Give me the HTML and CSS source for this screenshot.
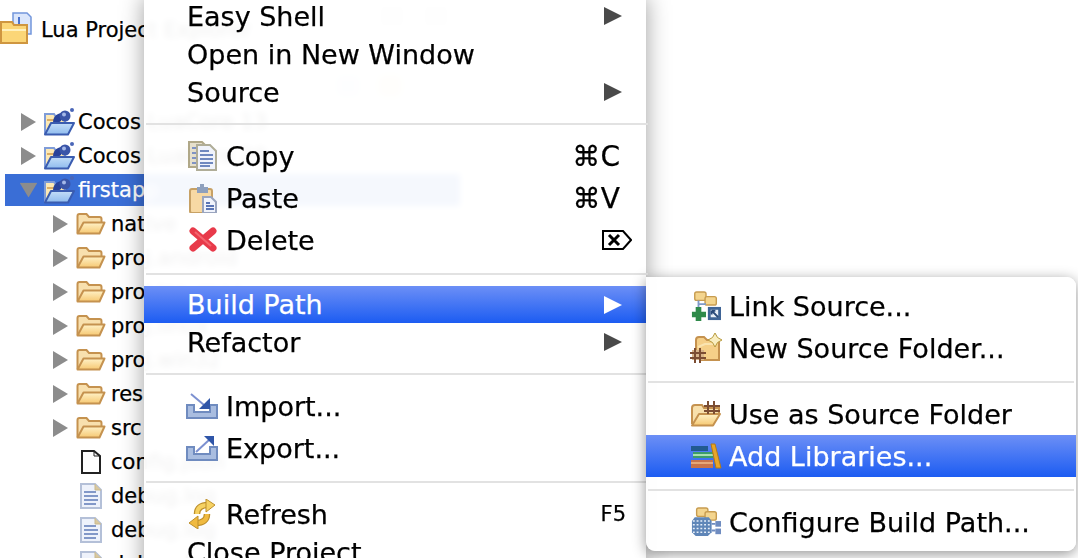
FILE: index.html
```html
<!DOCTYPE html>
<html lang="en">
<head>
<meta charset="utf-8">
<title>Lua Project Explorer</title>
<link rel="stylesheet" href="styles.css">
</head>
<body>
<svg class="defs" width="0" height="0" aria-hidden="true">
  <defs>
    <linearGradient id="fy" x1="0" y1="0" x2="0" y2="1"><stop offset="0" stop-color="#fff2c8"/><stop offset="1" stop-color="#f6c872"/></linearGradient>
    <linearGradient id="fb" x1="0" y1="0" x2="0" y2="1"><stop offset="0" stop-color="#c4def8"/><stop offset="1" stop-color="#8fbbee"/></linearGradient>
    <symbol id="folder" viewBox="0 0 30 24">
      <path d="M1.500 21V4q0-2 2-2h7l2.500 3h10.500q2 0 2 2v3" fill="#f8e0ae" stroke="#c5924f" stroke-width="2"/>
      <path d="M1.500 21.500 7.500 10.500h21l-5 11z" fill="url(#fy)" stroke="#c5924f" stroke-width="2" stroke-linejoin="round"/>
    </symbol>
    <symbol id="project" viewBox="0 0 32 28">
      <path d="M2 25V6h9l2 3h9v16z" fill="#fde9b4" stroke="#7f9cd8" stroke-width="2"/>
      <path d="M4 12h10" stroke="#dcae66" stroke-width="2"/>
      <path d="M10 15c0-6 3-9 8-10v8l-3 2z" fill="#28429a"/>
      <circle cx="22" cy="8" r="5.500" fill="#3a55a8"/><circle cx="21" cy="6.500" r="2" fill="#a4b8e8"/>
      <circle cx="29" cy="2" r="2" fill="#4a66b8"/>
      <path d="M2 26.500 8 15h23l-6 11.500z" fill="url(#fb)" stroke="#3a5cb0" stroke-width="2" stroke-linejoin="round"/>
    </symbol>
    <symbol id="triangle" viewBox="0 0 16 18" preserveAspectRatio="none"><path d="M0 0 16 9 0 18z"/></symbol>
    <symbol id="textdoc" viewBox="0 0 22 26">
      <path d="M1 1h14l6 6v18H1z" fill="#eef2fb" stroke="#b4c0d8" stroke-width="2"/>
      <path d="M15 1v6h6" fill="#d9c89e" stroke="#c9b98e"/>
      <path d="M4 9h12M4 13h14M4 17h14M4 21h12" stroke="#8298c8" stroke-width="2"/>
    </symbol>
  </defs>
</svg>

<main class="explorer">
  <header class="explorer-head">
    <svg class="head-icon" viewBox="0 0 32 32">
      <path d="M13 1h14l4 4v17H13z" fill="#dbe6fb" stroke="#7396dc" stroke-width="1.500"/>
      <path d="M19 5v9h7" fill="none" stroke="#4a72cc" stroke-width="2"/>
      <path d="M1 31V10h11l2 3h13v18z" fill="#fbd677" stroke="#cf9640" stroke-width="2"/>
      <path d="M2 18h24" stroke="#fff1bd" stroke-width="2"/>
    </svg>
    <span class="head-title">Lua Project Explorer</span>
    <span class="tool-box"></span>
    <span class="tool-box"></span>
  </header>
  <div class="toolbar">
    <span class="tool-dot blue"></span>
    <span class="tool-dot orange"></span>
  </div>

  <ul class="tree">
    <li class="tree-row"><svg class="tw"><use href="#triangle"/></svg><svg class="pi"><use href="#project"/></svg><span>Cocos LuaCore 13</span></li>
    <li class="tree-row"><svg class="tw"><use href="#triangle"/></svg><svg class="pi"><use href="#project"/></svg><span>Cocos LuaCore 20</span></li>
    <li class="tree-row selected"><svg class="tw open"><use href="#triangle"/></svg><svg class="pi"><use href="#project"/></svg><span>firstapp</span></li>
    <li class="tree-row child"><svg class="tw"><use href="#triangle"/></svg><svg class="fi"><use href="#folder"/></svg><span>native</span></li>
    <li class="tree-row child"><svg class="tw"><use href="#triangle"/></svg><svg class="fi"><use href="#folder"/></svg><span>proj.android</span></li>
    <li class="tree-row child"><svg class="tw"><use href="#triangle"/></svg><svg class="fi"><use href="#folder"/></svg><span>proj.ios_mac</span></li>
    <li class="tree-row child"><svg class="tw"><use href="#triangle"/></svg><svg class="fi"><use href="#folder"/></svg><span>proj.linux</span></li>
    <li class="tree-row child"><svg class="tw"><use href="#triangle"/></svg><svg class="fi"><use href="#folder"/></svg><span>proj.win32</span></li>
    <li class="tree-row child"><svg class="tw"><use href="#triangle"/></svg><svg class="fi"><use href="#folder"/></svg><span>res</span></li>
    <li class="tree-row child"><svg class="tw"><use href="#triangle"/></svg><svg class="fi"><use href="#folder"/></svg><span>src</span></li>
    <li class="tree-row file">
      <svg class="doc" viewBox="0 0 22 26"><path d="M2 2h12l6 5v17H2z" fill="#fff" stroke="#222" stroke-width="2"/><path d="M14 2v5h6" fill="none" stroke="#222"/></svg><span>config.json</span></li>
    <li class="tree-row file"><svg class="doc"><use href="#textdoc"/></svg><span>debug.log</span></li>
    <li class="tree-row file"><svg class="doc"><use href="#textdoc"/></svg><span>debug.log</span></li>
    <li class="tree-row file"><svg class="doc"><use href="#textdoc"/></svg><span>debug.log</span></li>
  </ul>
</main>

<nav class="menu main-menu">
  <div class="item"><span class="label">Easy Shell</span><svg class="arrow"><use href="#triangle"/></svg></div>
  <div class="item"><span class="label">Open in New Window</span></div>
  <div class="item"><span class="label">Source</span><svg class="arrow"><use href="#triangle"/></svg></div>
  <hr class="sep">
  <div class="item tall"><svg class="ico" viewBox="0 0 30 30"><path d="M2 1h13l3 3v22H2z" fill="#e6e0cc" stroke="#b0a888" stroke-width="2"/><path d="M5 7h8M5 12h8M5 17h8M5 22h8" stroke="#7f93c4" stroke-width="2"/><path d="M10 4h13l6 6v19H10z" fill="#f0f3fb" stroke="#b0ad98" stroke-width="2"/><path d="M13 10h9M13 14h13M13 18h13M13 22h13M13 25h10" stroke="#6f88bf" stroke-width="2"/></svg><span class="label">Copy</span><span class="key">⌘C</span></div>
  <div class="item tall"><svg class="ico" viewBox="0 0 30 30"><rect x="3" y="6" width="22" height="24" rx="2" fill="#f7d9a4" stroke="#c7a165" stroke-width="2"/><path d="M10 10V4h3V1h4v3h4v6z" fill="#8ea0bd"/><path d="M16 14h8l5 5v11H16z" fill="#f0f3fb" stroke="#9aa5bf" stroke-width="2"/><path d="M19 20h4M19 23h8M19 26h8" stroke="#5a75b5" stroke-width="2"/></svg><span class="label">Paste</span><span class="key">⌘V</span></div>
  <div class="item tall"><svg class="ico" viewBox="0 0 30 30"><path d="M6 6 26 23M26 6 6 23" stroke="#e83a4a" stroke-width="7" stroke-linecap="round"/><path d="M8 7 24 21" stroke="#f4646e" stroke-width="2"/></svg><span class="label">Delete</span><svg class="del-key" viewBox="0 0 30 20"><path d="M1 1h20l8 9-8 9H1z" fill="none" stroke="#000" stroke-width="2"/><path d="M7 5 17 15M17 5 7 15" stroke="#000" stroke-width="3"/></svg></div>
  <hr class="sep">
  <div class="item active"><span class="label">Build Path</span><svg class="arrow"><use href="#triangle"/></svg></div>
  <div class="item"><span class="label">Refactor</span><svg class="arrow"><use href="#triangle"/></svg></div>
  <hr class="sep">
  <div class="item tall"><svg class="ico wide" viewBox="0 0 32 26"><path d="M1 12h7v7h16v-7h7v13H1z" fill="#a9bde0" stroke="#6f8bbf" stroke-width="2"/><path d="M5 1l13 11" stroke="#7c90d0" stroke-width="2"/><path d="M13 16h11V5z" fill="#2f55a8"/></svg><span class="label">Import...</span></div>
  <div class="item tall"><svg class="ico wide" viewBox="0 0 32 26"><path d="M1 12h7v7h16v-7h7v13H1z" fill="#a9bde0" stroke="#6f8bbf" stroke-width="2"/><path d="M10 17 23 5" stroke="#7c90d0" stroke-width="2"/><path d="M18 1h10v10z" fill="#2f55a8"/></svg><span class="label">Export...</span></div>
  <hr class="sep">
  <div class="item tall"><svg class="ico" viewBox="0 0 30 30"><path d="M10 15c0-6 4-9 11-9" fill="none" stroke="#bd8f2c" stroke-width="6.500"/><path d="M10 15c0-6 4-9 11-9" fill="none" stroke="#f6d263" stroke-width="4"/><path d="M19 0l9 6-9 7z" fill="#f6d263" stroke="#bd8f2c"/><path d="M20 15c0 6-4 9-11 9" fill="none" stroke="#bd8f2c" stroke-width="6.500"/><path d="M20 15c0 6-4 9-11 9" fill="none" stroke="#f0ba40" stroke-width="4"/><path d="M11 17l-9 7 9 6z" fill="#f0ba40" stroke="#bd8f2c"/></svg><span class="label">Refresh</span><span class="key fn">F5</span></div>
  <div class="item last"><span class="label">Close Project</span></div>
</nav>

<nav class="menu sub-menu">
  <div class="item tall"><svg class="ico" viewBox="0 0 32 32"><rect x="4" y="1" width="12" height="9" rx="2" fill="#f4d58e" stroke="#c79c50" stroke-width="1.500"/><rect x="15" y="6" width="12" height="9" rx="2" fill="#f4d58e" stroke="#c79c50" stroke-width="1.500"/><path d="M8 10v8M8 14h8" stroke="#7f9ac8" stroke-width="2"/><path d="M5 17h6v5h5v6h-5v4H5v-4H1v-6h4z" fill="#2f8a4a"/><rect x="18" y="17" width="14" height="14" fill="#3f6496"/><rect x="21" y="20" width="8" height="8" fill="#e8eff8"/><path d="M22 21l7 7M22 21h4M22 21v4" stroke="#2a4a7a" stroke-width="2"/></svg><span class="label">Link Source...</span></div>
  <div class="item tall"><svg class="ico" viewBox="0 0 32 30"><path d="M6 18V7q0-3 3-3h5l3 3h12v20H10" fill="#f5cf88" stroke="#c5924f" stroke-width="2"/><path d="M8 14l7-3h10" fill="none" stroke="#fae4b0" stroke-width="2"/><path d="M25 0l2.500 4.500L32 7l-4.500 2.500L25 14l-2.500-4.500L18 7l4.500-2.500z" fill="#f9eec0" stroke="#b79a3e"/><rect x="2" y="17" width="12" height="10" fill="#d8b48a"/><path d="M0 20h16M0 25h16M5 15v15M10 15v15" stroke="#7c4d32" stroke-width="2"/></svg><span class="label">New Source Folder...</span></div>
  <hr class="sep">
  <div class="item tall"><svg class="ico" viewBox="0 0 32 26"><path d="M2 23V7q0-3 3-3h7l2 3h15v6" fill="#f8e0ac" stroke="#c5924f" stroke-width="2"/><path d="M2 24.500 9 13h21l-7 11.500z" fill="url(#fy)" stroke="#c5924f" stroke-width="2" stroke-linejoin="round"/><path d="M14 5h16M14 10h16M18 0v13M24 0v13" stroke="#7c4d32" stroke-width="2"/></svg><span class="label">Use as Source Folder</span></div>
  <div class="item tall active"><svg class="ico" viewBox="0 0 32 26"><rect x="1" y="17" width="22" height="8" fill="#c9744a"/><rect x="1" y="19" width="22" height="2" fill="#e6a878"/><rect x="3" y="9" width="20" height="6" fill="#3d9c6a"/><rect x="3" y="11" width="20" height="2" fill="#a8e0b0"/><rect x="1" y="3" width="17" height="5" fill="#225a90"/><path d="M21 1h4l6 24h-5z" fill="#e8a52a" stroke="#b27a18"/></svg><span class="label">Add Libraries...</span></div>
  <hr class="sep">
  <div class="item tall"><svg class="ico" viewBox="0 0 32 32"><rect x="6" y="1" width="12" height="9" rx="2" fill="#f4d58e" stroke="#c79c50" stroke-width="1.500"/><rect x="15" y="5" width="12" height="9" rx="2" fill="#f4d58e" stroke="#c79c50" stroke-width="1.500"/><path d="M4 11h15l3 4v12l-4 4H5l-4-4V15z" fill="#5f86b8"/><path d="M2 15h19M2 19h19M2 23h19M2 27h19" stroke="#e6eef8" stroke-width="1.500" stroke-dasharray="2 2"/><path d="M22 18h4M22 25h4" stroke="#6f8cc0" stroke-width="2"/><rect x="26" y="15" width="6" height="6" fill="#6f8cc0"/><rect x="26" y="23" width="6" height="6" fill="#6f8cc0"/></svg><span class="label">Configure Build Path...</span></div>
</nav>
</body>
</html>
```
FILE: styles.css
```css
* { box-sizing: border-box; }
html, body { margin: 0; height: 100%; }
body {
  position: relative;
  width: 1078px;
  height: 558px;
  overflow: hidden;
  background: #fff;
  color: #000;
  font-family: "DejaVu Sans", "Liberation Sans", sans-serif;
  -webkit-text-stroke: 0.25px currentColor;
}
.defs { position: absolute; }

.explorer { width: 470px; font-size: 21px; }
.explorer-head { display: flex; align-items: center; height: 60px; }
.head-icon { width: 32px; height: 32px; margin: -4px 9px 0 0; flex: none; }
.head-title { width: 338px; white-space: nowrap; }
.tool-box { width: 26px; height: 22px; margin-right: 18px; margin-top: -28px; background: #e6e6e6; flex: none; }
.toolbar { display: flex; gap: 16px; height: 45px; padding: 14px 0 0 335px; }
.tool-dot { width: 26px; height: 24px; border-radius: 8px; }
.tool-dot.blue { background: #dbe7f6; }
.tool-dot.orange { background: #f8e6c4; }

.tree { list-style: none; margin: 0; padding: 0 0 0 5px; }
.tree-row {
  display: flex;
  align-items: center;
  width: 455px;
  height: 34px;
  padding-left: 16px;
  white-space: nowrap;
}
.tree-row.selected { background: #3a6ed6; color: #fff; margin: 1px 0; height: 32px; }
.tree-row.child { padding-left: 48px; }
.tree-row.file { padding-left: 75px; }
.tw { width: 15px; height: 18px; fill: #8c8c8c; flex: none; }
.tw.open { transform: rotate(90deg); }
.pi { width: 32px; height: 28px; margin: 0 3px 0 7px; flex: none; }
.fi { width: 30px; height: 24px; margin: 0 5px 0 8px; flex: none; }
.doc { width: 22px; height: 26px; margin-right: 9px; flex: none; }

.menu {
  position: absolute;
  display: flex;
  flex-direction: column;
  background: rgba(255, 255, 255, 0.95);
  -webkit-backdrop-filter: blur(3px);
  backdrop-filter: blur(3px);
  font-size: 27px;
}
.main-menu {
  left: 144px;
  top: -3px;
  width: 502px;
  height: 580px;
  box-shadow: 0 0 22px rgba(0, 0, 0, 0.38);
}
.sub-menu {
  left: 646px;
  top: 277px;
  width: 430px;
  height: 274px;
  padding: 8px 0;
  border-radius: 0 9px 9px 9px;
  box-shadow: 0 3px 14px rgba(0, 0, 0, 0.42);
}
.item {
  display: flex;
  align-items: center;
  height: 38px;
  padding: 0 20px 0 43px;
  white-space: nowrap;
}
.item.tall { height: 42px; }
.item.last { height: 34px; }
.item.active {
  background: linear-gradient(#6c8ff6, #1c5cf2);
  color: #fff;
}
.main-menu .item.active { height: 37px; margin-top: 1px; }
.item.active .arrow { fill: #fff; }
.ico { width: 30px; height: 30px; margin-right: 9px; flex: none; }
.ico.wide { width: 32px; height: 26px; margin: 0 8px 0 -1px; }
.sub-menu .item { padding-left: 44px; }
.sub-menu .ico { width: 32px; margin: 0 7px 0 0; }
.label { flex: 1; }
.arrow { width: 18px; height: 18px; margin-right: 4px; fill: #4a4a4a; flex: none; }
.key { margin-right: 6px; font-size: 28px; }
.key.fn { margin-right: 0; font-size: 21px; }
.del-key { width: 30px; height: 20px; margin-right: -6px; flex: none; }
.sep { width: 100%; height: 2px; margin: 12px 0 10px; border: 0; background: #e2e2e2; flex: none; }
.main-menu .sep { margin-left: 2px; }
.sub-menu .sep { margin-left: 2px; width: 426px; }
```
